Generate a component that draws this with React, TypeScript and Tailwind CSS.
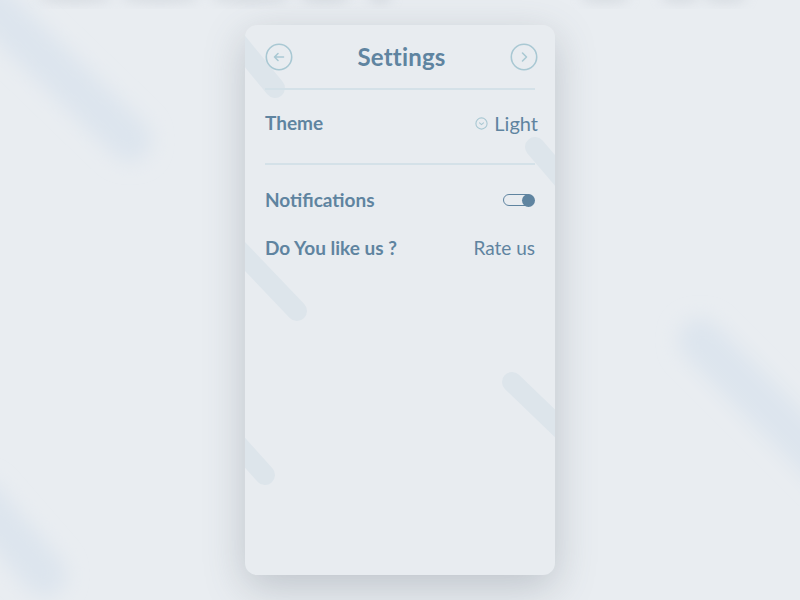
import React, { useState } from "react";

const font = { fontFamily: "Lato, 'Open Sans', sans-serif" };

function CircleButton({ dir }: { dir: "left" | "right" }) {
  return (
    <button
      className={
        dir === "right"
          ? "-mr-[3px] flex h-[28px] w-[28px] items-center justify-center"
          : "flex h-[28px] w-[28px] items-center justify-center"
      }
    >
      <svg width="28" height="28" viewBox="0 0 28 28" fill="none">
        <circle cx="14" cy="14" r="12.7" stroke="#a9c8d3" strokeWidth="1.6" />
        {dir === "left" ? (
          <path
            d="M18.5 14H9.5M13 10.5L9.5 14L13 17.5"
            stroke="#a9c8d3"
            strokeWidth="1.6"
            strokeLinecap="round"
            strokeLinejoin="round"
          />
        ) : (
          <path
            d="M12.5 10L16.5 14L12.5 18"
            stroke="#a9c8d3"
            strokeWidth="1.6"
            strokeLinecap="round"
            strokeLinejoin="round"
          />
        )}
      </svg>
    </button>
  );
}

function Toggle() {
  const [on, setOn] = useState(true);
  return (
    <button onClick={() => setOn(!on)} className="relative flex h-[14px] w-[32px] items-center">
      <span className="h-[12px] w-[30px] rounded-full border-[1.5px] border-[#5f84a0]" />
      <span
        className={
          on
            ? "absolute right-0 h-[13px] w-[13px] rounded-full bg-[#5f84a0]"
            : "absolute left-0 h-[13px] w-[13px] rounded-full bg-[#5f84a0]"
        }
      />
    </button>
  );
}

export default function App() {
  return (
    <div
      style={font}
      className="relative flex h-[600px] w-[800px] justify-center overflow-hidden bg-[#e9edf1] pt-[25px]"
    >
      {/* blurred background decoration */}
      <svg className="absolute inset-0" width="800" height="600">
        <defs>
          <filter id="bl" x="-50%" y="-50%" width="200%" height="200%">
            <feGaussianBlur stdDeviation="10" />
          </filter>
          <filter id="bl2" x="-50%" y="-50%" width="200%" height="200%">
            <feGaussianBlur stdDeviation="6" />
          </filter>
        </defs>
        <g filter="url(#bl)" stroke="#dde5ee" strokeWidth="44" strokeLinecap="round">
          <line x1="-10" y1="5" x2="130" y2="140" />
          <line x1="700" y1="340" x2="830" y2="470" />
          <line x1="-20" y1="500" x2="45" y2="575" />
        </g>
        <g filter="url(#bl2)" fill="#c6ccd3" opacity="0.55">
          <ellipse cx="75" cy="-3" rx="38" ry="6" />
          <ellipse cx="160" cy="-3" rx="40" ry="6" />
          <ellipse cx="250" cy="-3" rx="40" ry="6" />
          <ellipse cx="325" cy="-3" rx="25" ry="6" />
          <ellipse cx="380" cy="-3" rx="12" ry="6" />
          <ellipse cx="605" cy="-3" rx="25" ry="6" />
          <ellipse cx="680" cy="-3" rx="20" ry="6" />
          <ellipse cx="725" cy="-3" rx="22" ry="6" />
        </g>
      </svg>

      <div className="relative h-[550px] w-[310px] overflow-hidden rounded-[12px] bg-[#e8ecf0] shadow-[0_12px_40px_rgba(80,90,105,0.28)]">
        {/* stripes */}
        <svg className="absolute inset-0" width="310" height="550">
          <g stroke="#dde5eb" strokeWidth="20" strokeLinecap="round">
            <line x1="-40" y1="-22" x2="30" y2="63" />
            <line x1="290" y1="122" x2="350" y2="192" />
            <line x1="-30" y1="200" x2="52" y2="286" />
            <line x1="267" y1="357" x2="350" y2="437" />
            <line x1="-40" y1="383" x2="20" y2="450" />
          </g>
        </svg>

        <div className="relative flex flex-col px-5">
          <div className="flex h-[63px] items-center justify-between">
            <CircleButton dir="left" />
            <h1 className="text-[24px] font-bold tracking-[0.2px] text-[#5f84a0]">Settings</h1>
            <CircleButton dir="right" />
          </div>
          <div className="h-[2px] bg-[#d4e1e8]" />

          <div className="flex h-[66px] items-center justify-between">
            <span className="text-[19px] font-bold text-[#5f84a0]">Theme</span>
            <div className="-mr-[3px] flex items-center gap-[6px]">
              <svg width="13" height="13" viewBox="0 0 13 13" fill="none">
                <circle cx="6.5" cy="6.5" r="5.6" stroke="#a9c8d3" strokeWidth="1.1" />
                <path d="M4.5 5.8L6.5 7.6L8.5 5.8" stroke="#a9c8d3" strokeWidth="1.1" strokeLinecap="round" />
              </svg>
              <span className="text-[20px] text-[#5f84a0]">Light</span>
            </div>
          </div>
          <div className="mt-[7px] h-[2px] bg-[#d4e1e8]" />

          <div className="flex h-[70px] items-center justify-between">
            <span className="text-[19px] font-bold text-[#5f84a0]">Notifications</span>
            <Toggle />
          </div>
          <div className="flex h-[26px] items-center justify-between">
            <span className="text-[19px] font-bold text-[#5f84a0]">Do You like us ?</span>
            <span className="text-[19px] text-[#5f84a0]">Rate us</span>
          </div>
        </div>
      </div>
    </div>
  );
}
